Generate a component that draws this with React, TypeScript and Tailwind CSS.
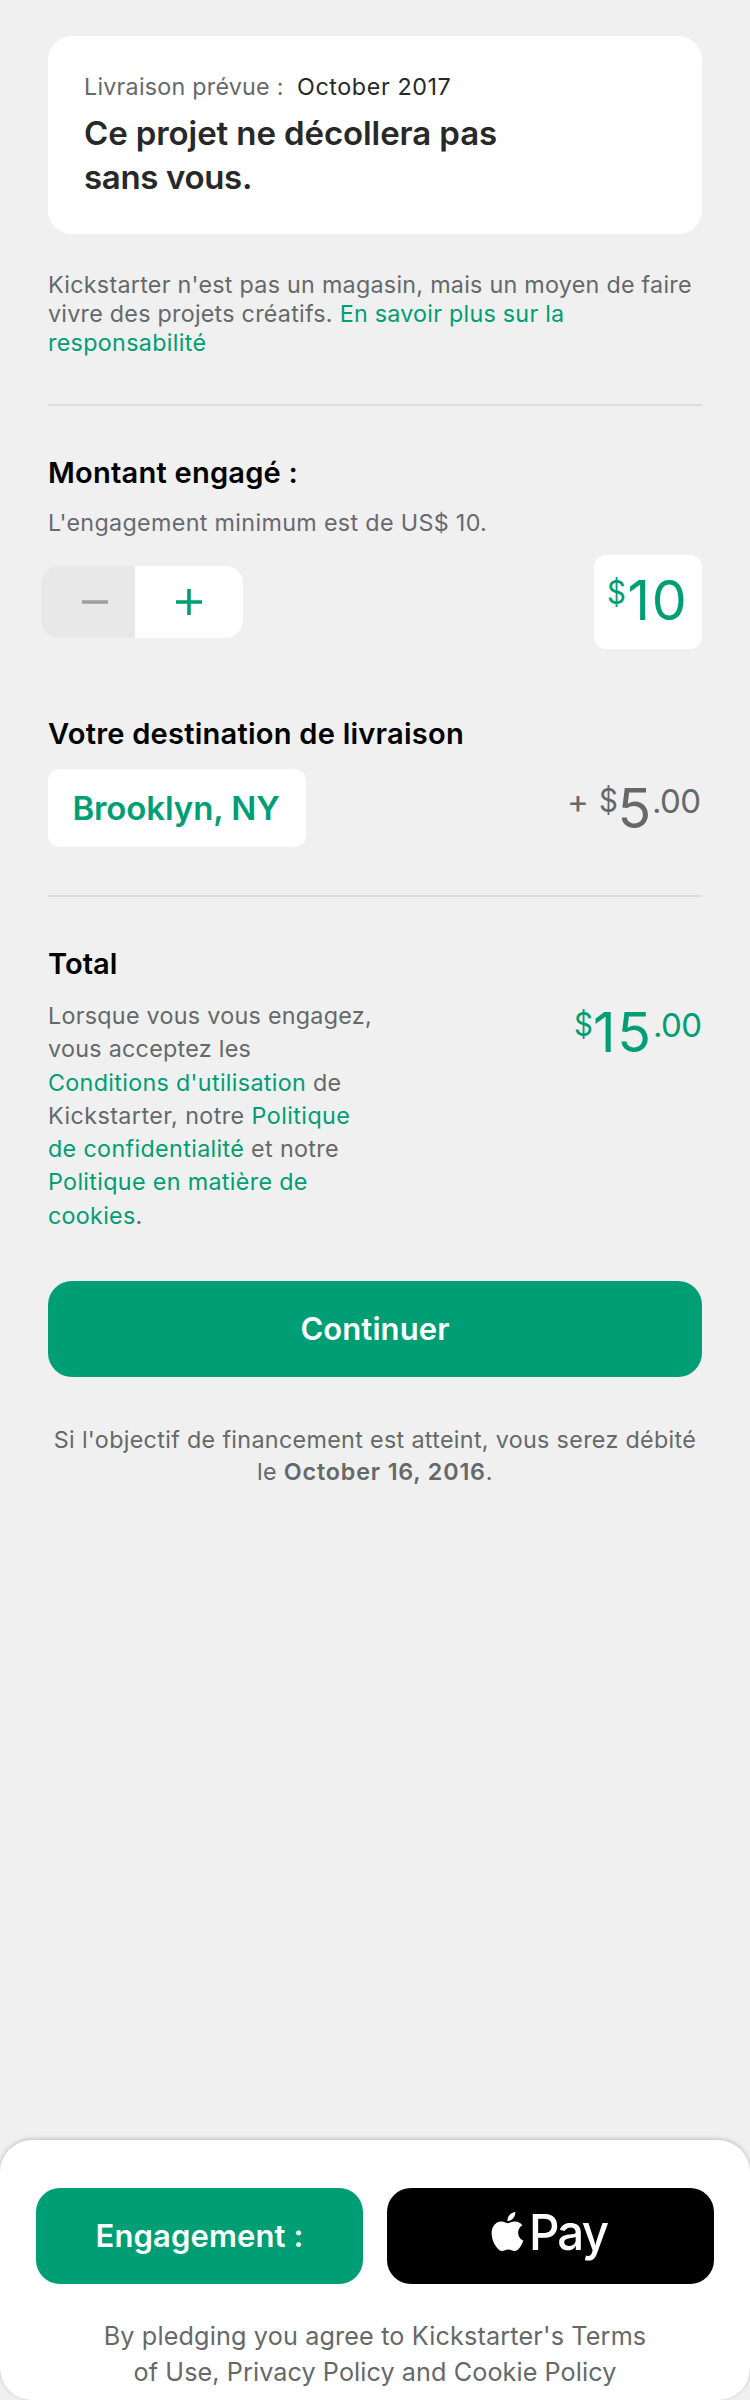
import type { ReactNode } from "react";
import { SiApple } from "react-icons/si";

function Line({ className = "", children }: { className?: string; children: ReactNode }) {
  return <span className={`block whitespace-nowrap ${className}`}>{children}</span>;
}

function Green({ children }: { children: ReactNode }) {
  return <a className="text-[#009e74]">{children}</a>;
}

function Small({ className, children }: { className: string; children: ReactNode }) {
  return <span className={`mt-[3px] text-[33px] leading-[36px] whitespace-nowrap ${className}`}>{children}</span>;
}

function Dollar({ className }: { className: string }) {
  return <span className={`mt-[3px] -ml-px origin-left scale-x-[0.92] text-[32px] leading-[36px] ${className}`}>$</span>;
}

function Big({ className, children }: { className: string; children: ReactNode }) {
  return <span className={`text-[55.5px] leading-[56px] whitespace-nowrap ${className}`}>{children}</span>;
}

function RewardCard() {
  return (
    <section className="h-[198px] rounded-[24px] bg-white px-9 pt-9 text-[#272828]">
      <div className="flex text-[23.3px] leading-[29px] whitespace-nowrap">
        <span className="w-[213px] tracking-[0.01em] text-[#656969]">Livraison prévue :</span>
        <span className="tracking-[0.0256em]">October 2017</span>
      </div>
      <h1 className="mt-[10px] text-[33px] leading-[44px] font-semibold">
        <Line className="tracking-[-0.003em]">Ce projet ne décollera pas</Line>
        <Line className="tracking-[-0.01em]">sans vous.</Line>
      </h1>
    </section>
  );
}

function Stepper() {
  return (
    <div className="-ml-[7px] flex h-[72px] overflow-hidden rounded-[18px]">
      <button className="flex w-[94px] items-center justify-center bg-[#e8e8e8] pl-[14px]">
        <svg width="28" height="28" viewBox="0 0 28 28">
          <path d="M1 14H27" stroke="#9a9e9d" strokeWidth="3.6" />
        </svg>
      </button>
      <button className="flex w-[108px] items-center justify-center bg-white">
        <svg width="28" height="28" viewBox="0 0 28 28">
          <path d="M1 14H27M14 1V27" stroke="#009e74" strokeWidth="3.6" />
        </svg>
      </button>
    </div>
  );
}

export default function App() {
  return (
    <div className="flex h-[2400px] w-[750px] flex-col overflow-hidden bg-[#f0f0f0] font-['Inter',sans-serif] text-[#656969]">
      <main className="flex flex-col px-12 pt-9">
        <RewardCard />

        <p className="mt-9 text-[23.3px] leading-[29px]">
          <Line className="tracking-[0.0114em]">Kickstarter n'est pas un magasin, mais un moyen de faire</Line>
          <Line className="tracking-[0.0107em]">
            vivre des projets créatifs. <Green>En savoir plus sur la</Green>
          </Line>
          <Line className="tracking-[0.0138em]">
            <Green>responsabilité</Green>
          </Line>
        </p>

        <hr className="mt-[47px] h-[2px] border-0 bg-[#dcdedd]" />

        <h2 className="mt-[49px] text-[29.1px] leading-[36px] font-semibold tracking-[0.007em] text-black">
          Montant engagé :
        </h2>
        <p className="mt-[17px] text-[23.3px] leading-[29px] tracking-[0.0145em] text-[#696970]">
          L'engagement minimum est de US$ 10.
        </p>
        <div className="mt-[18px] flex items-center justify-between">
          <Stepper />
          <div className="flex h-[94px] w-[108px] rounded-[12px] bg-white pt-[17px] pl-[14px] text-[#009e74]">
            <Dollar className="w-[20.5px]" />
            <Big className="tracking-[0.03em]">10</Big>
          </div>
        </div>

        <h2 className="mt-[67px] text-[29.1px] leading-[36px] font-semibold tracking-[0.0075em] text-black">
          Votre destination de livraison
        </h2>
        <div className="mt-[17px] flex items-start justify-between">
          <button className="flex h-[78px] w-[258px] items-center justify-center rounded-[12px] bg-white pr-[2px] text-[33px] leading-[40px] font-semibold tracking-[-0.003em] text-[#009e74]">
            Brooklyn, NY
          </button>
          <div className="flex pt-[11px]">
            <Small className="w-[33px]">+</Small>
            <Dollar className="w-[18.5px]" />
            <Big className="w-[34.5px]">5</Big>
            <Small className="w-[50px] tracking-[-0.018em]">.00</Small>
          </div>
        </div>

        <hr className="mt-12 h-[2px] border-0 bg-[#dcdedd]" />

        <h2 className="mt-[49px] text-[29.1px] leading-[36px] font-semibold text-black">Total</h2>
        <div className="mt-[17px] flex h-[234px] items-start justify-between">
          <p className="text-[23.3px] leading-[33.3px]">
            <Line className="tracking-[0.012em]">Lorsque vous vous engagez,</Line>
            <Line className="tracking-[0.012em]">vous acceptez les</Line>
            <Line className="tracking-[0.0136em]">
              <Green>Conditions d'utilisation</Green> de
            </Line>
            <Line className="tracking-[0.0184em]">
              Kickstarter, notre <Green>Politique</Green>
            </Line>
            <Line className="tracking-[0.015em]">
              <Green>de confidentialité</Green> et notre
            </Line>
            <Line className="tracking-[0.0143em]">
              <Green>Politique en matière de</Green>
            </Line>
            <Line className="tracking-[0.0119em]">
              <Green>cookies</Green>.
            </Line>
          </p>
          <div className="flex pt-[5px] text-[#009e74]">
            <Dollar className="w-[19.5px]" />
            <Big className="w-[60px] tracking-[0.03em]">15</Big>
            <Small className="w-[49px] tracking-[-0.018em]">.00</Small>
          </div>
        </div>

        <button className="mt-12 flex h-24 items-center justify-center rounded-[24px] bg-[#009e74] text-[31px] leading-[40px] font-semibold tracking-[0.003em] text-white">
          Continuer
        </button>

        <p className="mt-[46.5px] text-center text-[23.3px] leading-[32px]">
          <Line className="tracking-[0.0141em]">Si l'objectif de financement est atteint, vous serez débité</Line>
          <Line className="tracking-[0.0141em]">
            le <b className="font-semibold tracking-[0.036em]">October 16, 2016</b>.
          </Line>
        </p>
      </main>

      <footer className="mt-auto h-[260px] rounded-[32px] bg-white px-9 pt-12 shadow-[0_-1px_4px_rgba(0,0,0,0.22)]">
        <div className="grid grid-cols-2 gap-6">
          <button className="flex h-24 items-center justify-center rounded-[24px] bg-[#009e74] text-[31px] leading-[40px] font-semibold tracking-[0.004em] text-white">
            Engagement :
          </button>
          <button className="flex h-24 items-start rounded-[24px] bg-black pl-[101px] text-white">
            <SiApple className="mt-6 h-[39px] w-[39px] shrink-0" />
            <span className="ml-[2px] origin-left scale-x-[0.95] pt-[12px] text-[50px] leading-[64px] font-medium tracking-[-0.04em]">
              Pay
            </span>
          </button>
        </div>
        <p className="mt-[34px] text-center text-[25.2px] leading-[36px]">
          <Line className="tracking-[0.006em]">By pledging you agree to Kickstarter's Terms</Line>
          <Line className="tracking-[0.0033em]">of Use, Privacy Policy and Cookie Policy</Line>
        </p>
      </footer>
    </div>
  );
}
